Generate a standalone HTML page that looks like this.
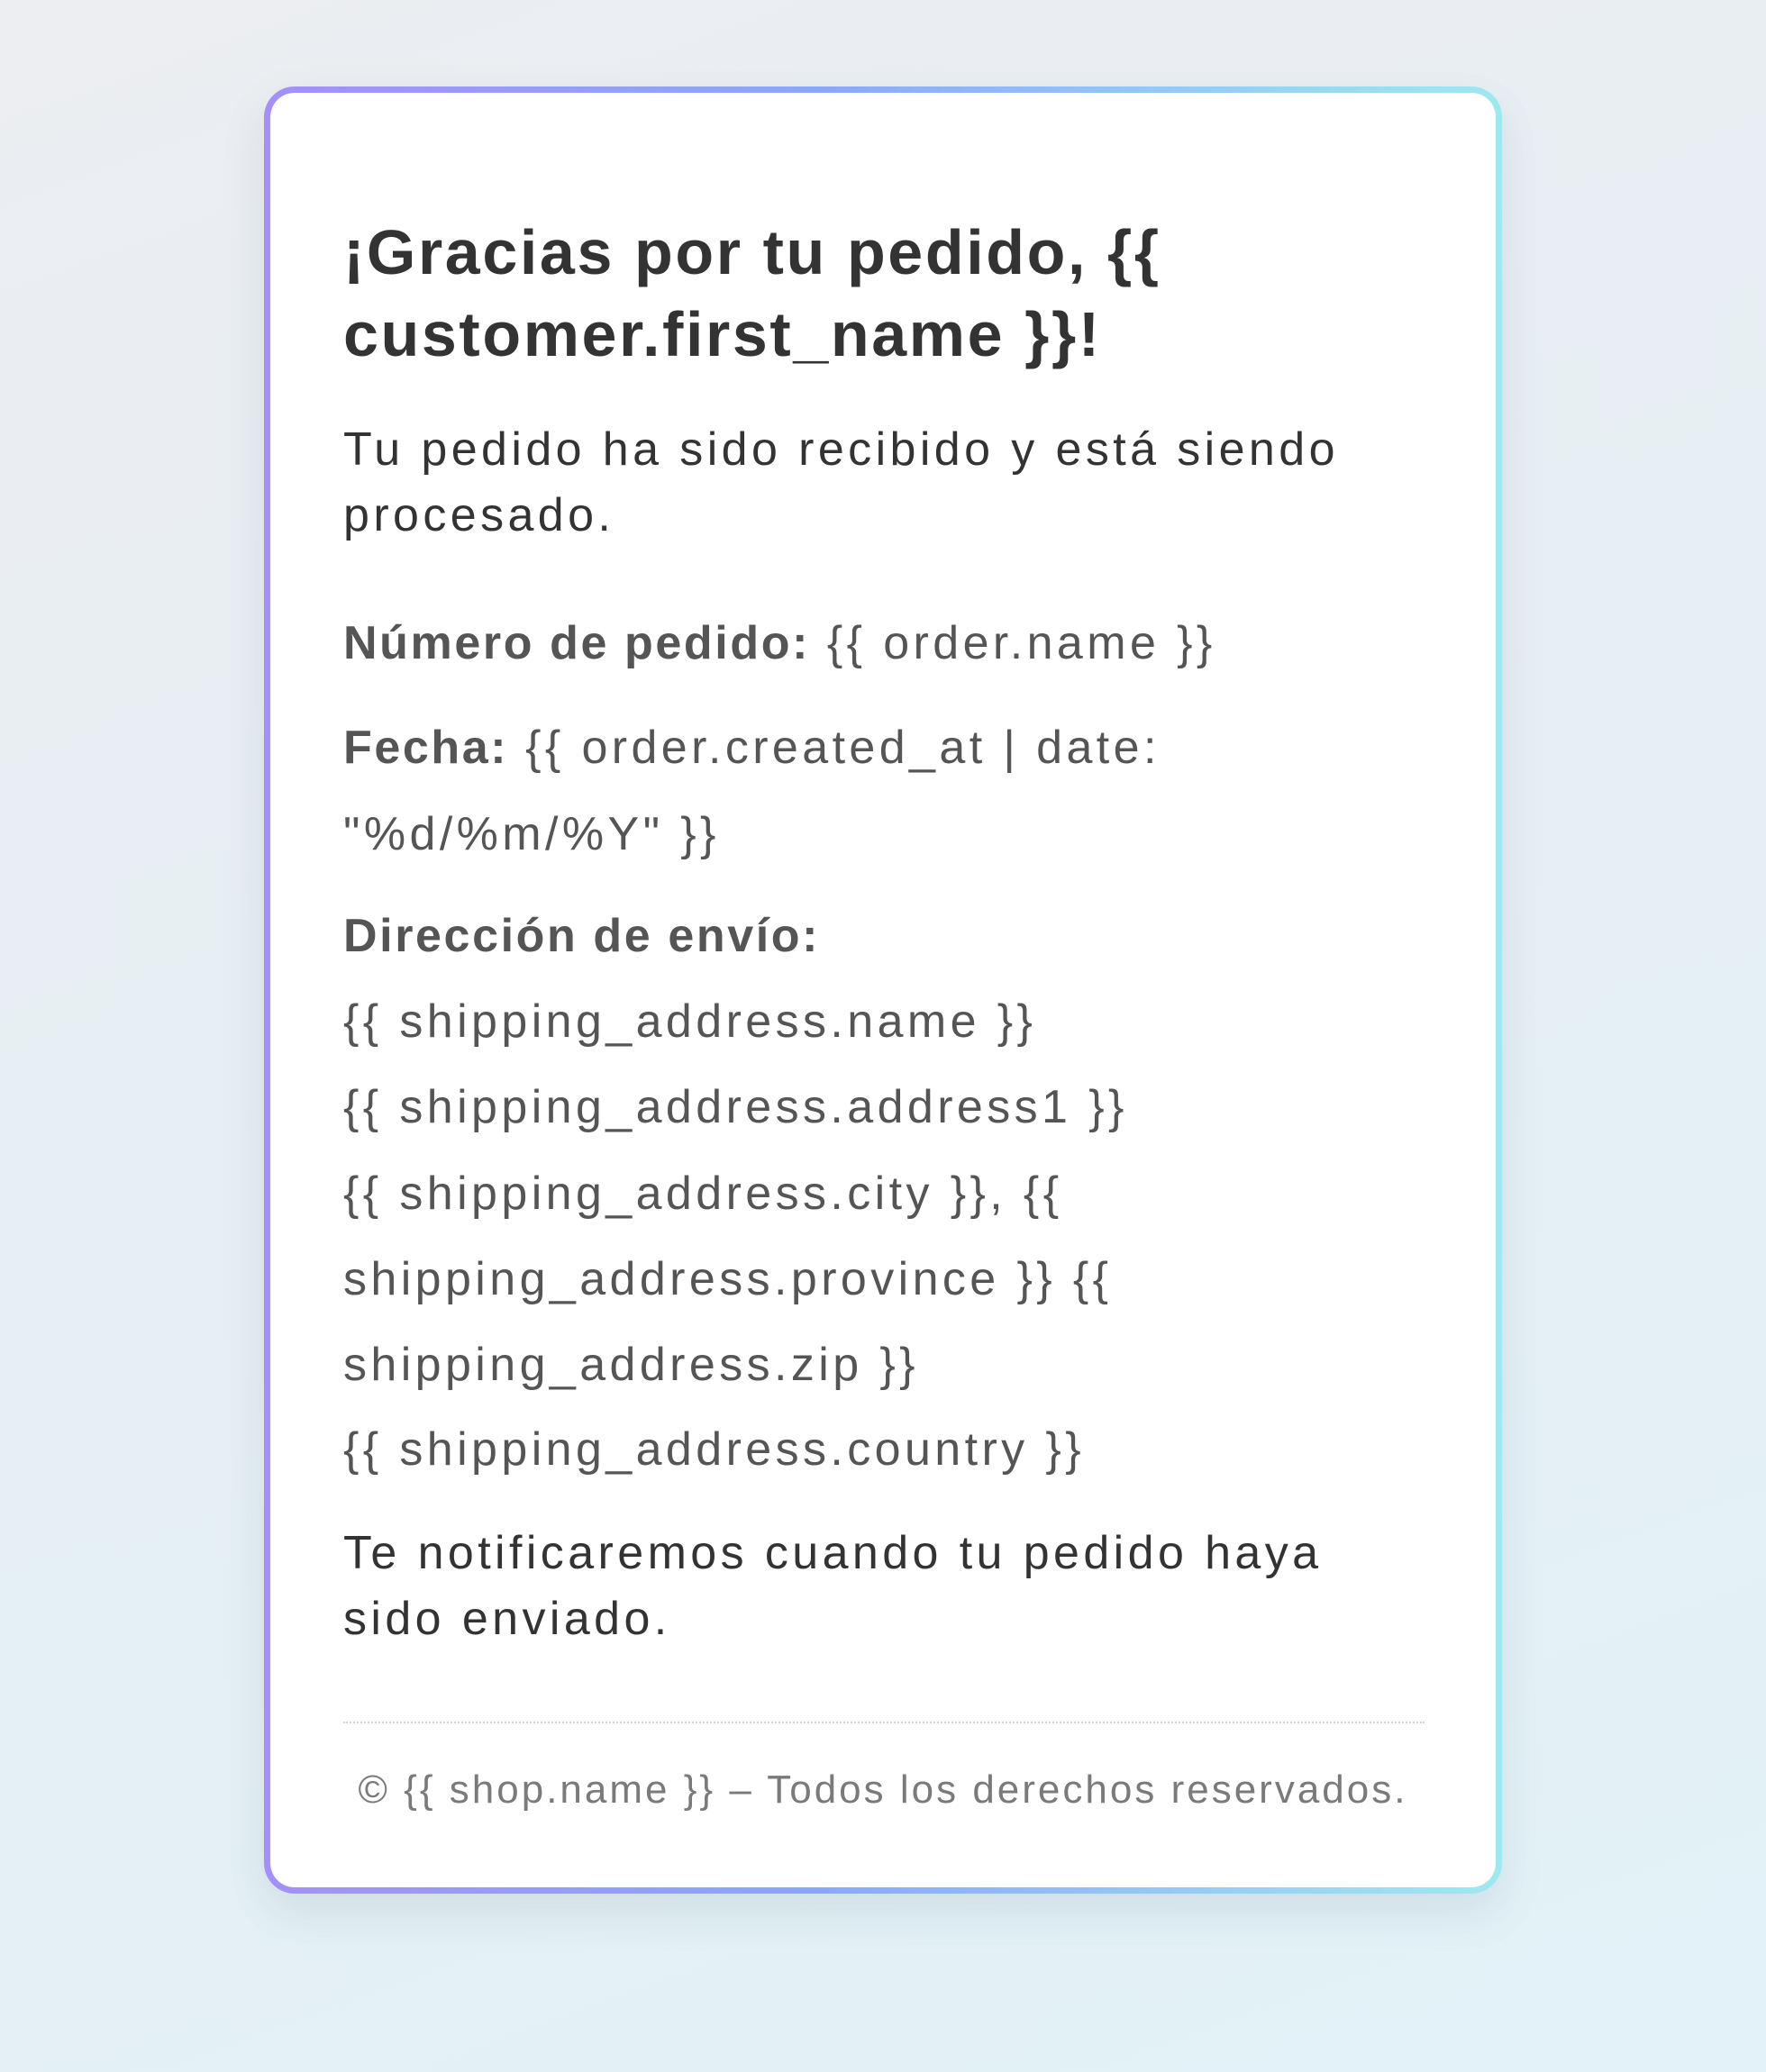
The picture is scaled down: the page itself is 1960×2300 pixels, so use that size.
<!DOCTYPE html>
<html><head><meta charset="utf-8"><style>
html,body{margin:0;width:1960px;height:2300px;overflow:hidden}
body{background:linear-gradient(160deg,#eceef1 0%,#e6eff4 50%,#e2f2f8 100%);font-family:"Liberation Sans",sans-serif;position:relative}
.card{position:absolute;left:293px;top:96px;width:1374px;height:2006px;box-sizing:border-box;border:7px solid transparent;border-radius:34px;
background:linear-gradient(#fff,#fff) padding-box,linear-gradient(90deg,#a48ffc 0%,#8aa8fb 45%,#9ee9f0 100%) border-box;
box-shadow:0 20px 50px rgba(60,80,100,.12)}
.l{position:absolute;left:381px;white-space:nowrap;height:80px;line-height:80px}
.h{font-weight:bold;font-size:70px;color:#333;letter-spacing:2.6px}
.p{font-size:52px;color:#333;letter-spacing:4.4px}
.v{font-size:52px;color:#555;letter-spacing:4.4px}
.v b{color:#555;letter-spacing:2.6px}
.f{font-size:44px;color:#7a7a7a;left:293px;width:1374px;text-align:center;letter-spacing:3px}
.div{position:absolute;left:381px;width:1200px;top:1911px;border-top:2px dotted #d4d4d4}
</style></head><body>
<div class="card"></div>
<div class="l h" style="top:240px">¡Gracias por tu pedido, {{</div>
<div class="l h" style="top:331px">customer.first_name }}!</div>
<div class="l p" style="top:459px">Tu pedido ha sido recibido y está siendo</div>
<div class="l p" style="top:532px">procesado.</div>
<div class="l v" style="top:674px"><b>Número de pedido:</b> {{ order.name }}</div>
<div class="l v" style="top:790px"><b>Fecha:</b> {{ order.created_at | date:</div>
<div class="l v" style="top:886px">"%d/%m/%Y" }}</div>
<div class="l v" style="top:999px"><b>Dirección de envío:</b></div>
<div class="l v" style="top:1094px">{{ shipping_address.name }}</div>
<div class="l v" style="top:1189px">{{ shipping_address.address1 }}</div>
<div class="l v" style="top:1285px">{{ shipping_address.city }}, {{</div>
<div class="l v" style="top:1380px">shipping_address.province }} {{</div>
<div class="l v" style="top:1475px">shipping_address.zip }}</div>
<div class="l v" style="top:1569px">{{ shipping_address.country }}</div>
<div class="l p" style="top:1684px">Te notificaremos cuando tu pedido haya</div>
<div class="l p" style="top:1757px">sido enviado.</div>
<div class="div"></div>
<div class="l f" style="top:1947px">© {{ shop.name }} – Todos los derechos reservados.</div>
</body></html>
